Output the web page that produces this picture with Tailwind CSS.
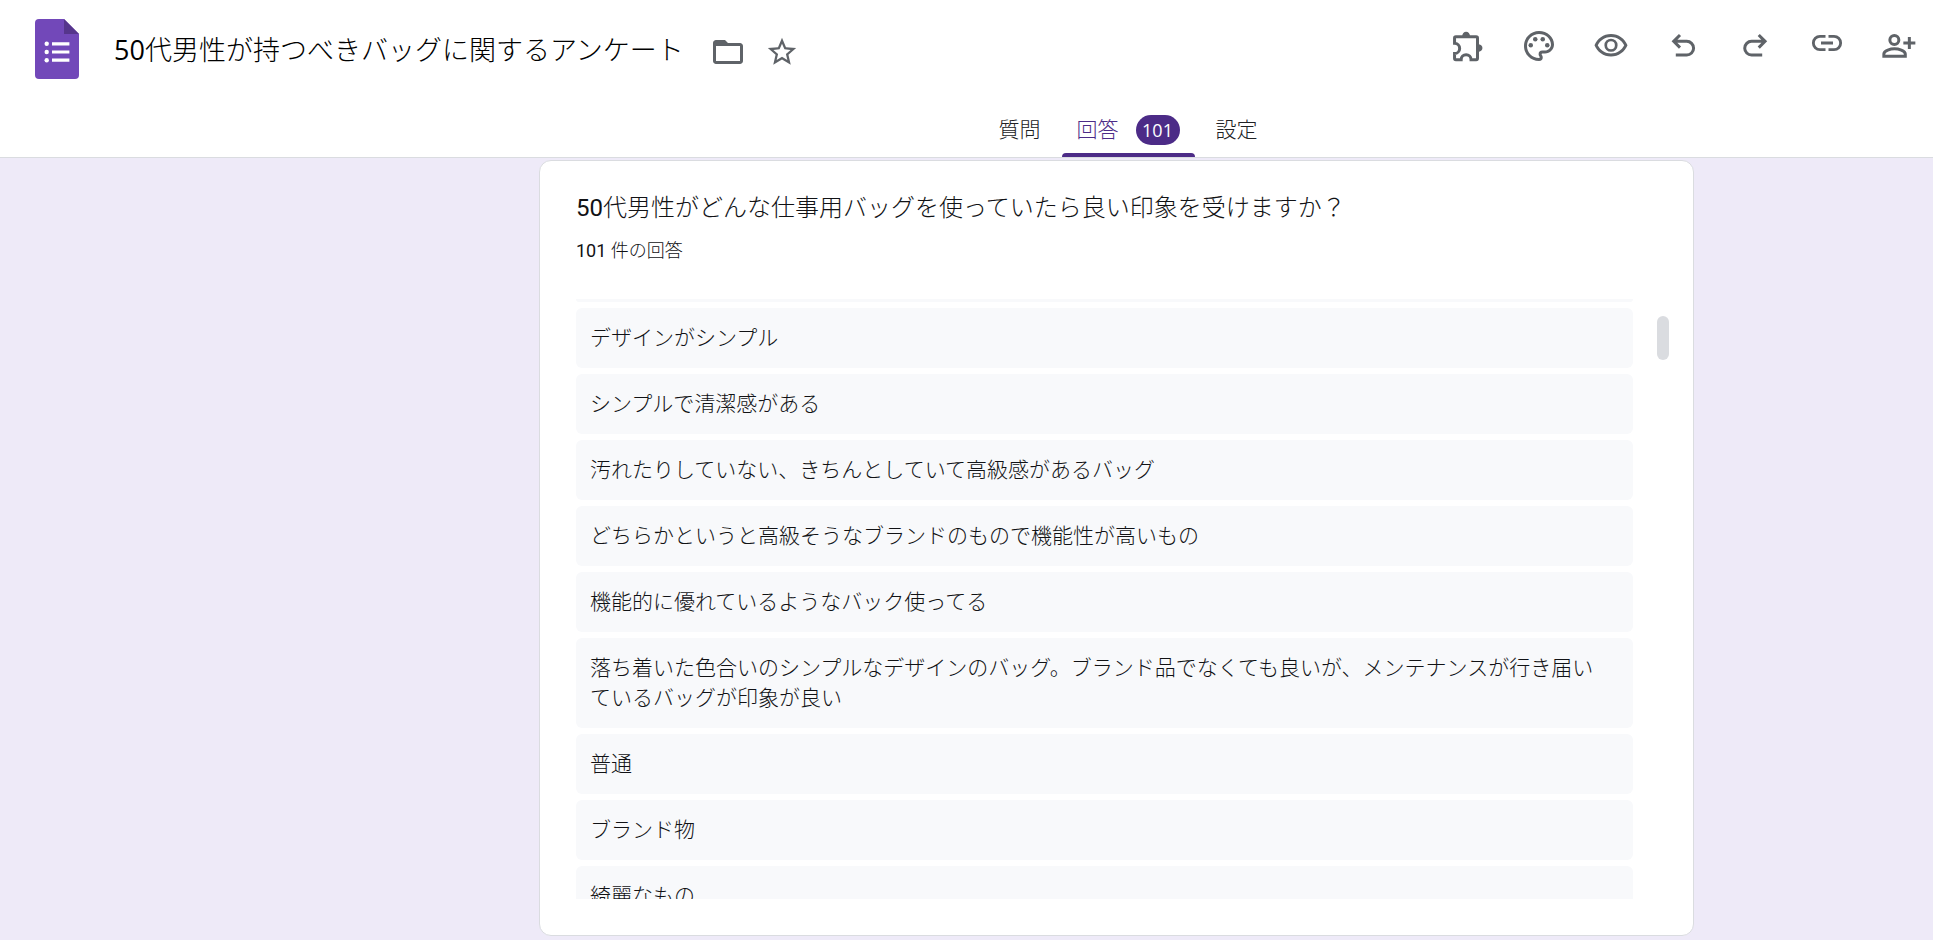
<!DOCTYPE html>
<html lang="ja">
<head>
<meta charset="utf-8">
<meta name="viewport" content="width=device-width, initial-scale=1">
<title>50代男性が持つべきバッグに関するアンケート</title>
<script src="https://cdn.jsdelivr.net/npm/@tailwindcss/browser@4"></script>
</head>
<body class="flex min-h-screen flex-col bg-[#eeeaf8] font-['Roboto','Noto_Sans_CJK_JP',sans-serif] font-light text-[#111215]">
  <header class="border-b border-[#dadce0] bg-white">
    <div class="flex items-start justify-between pl-[35px] pr-4">
      <div class="flex items-center pt-[19px]">
        <a href="#" aria-label="フォーム ホーム" class="shrink-0">
          <svg class="h-[60px] w-11" viewBox="0 0 44 60">
            <path fill="#7248b9" d="M4 0h25l15 15v41a4 4 0 0 1-4 4H4a4 4 0 0 1-4-4V4a4 4 0 0 1 4-4z"/>
            <path fill="#56358c" d="M29 0l15 15H29z"/>
            <g fill="#fff"><circle cx="11.7" cy="24.7" r="2.2"/><circle cx="11.7" cy="33" r="2.2"/><circle cx="11.7" cy="41.2" r="2.2"/>
            <path d="M17 23.2h17.4v3.2H17zM17 31.4h17.4v3.2H17zM17 39.6h17.4v3.2H17z"/></g>
          </svg>
        </a>
        <h1 class="ml-[35px] mt-[2px] font-['Open_Sans','Noto_Sans_CJK_JP',sans-serif] text-[27px] leading-9 text-black"><span class="font-normal">50</span>代男性が持つべきバッグに関するアンケート</h1>
        <button type="button" aria-label="フォルダに移動" class="ml-[26px] mt-[6px] text-[#5f6368]">
          <svg class="size-9" viewBox="0 0 24 24" fill="currentColor"><path d="M20 6h-8l-2-2H4c-1.1 0-2 .9-2 2v12c0 1.1.9 2 2 2h16c1.1 0 2-.9 2-2V8c0-1.1-.9-2-2-2zm0 12H4V8h16v10z"/></svg>
        </button>
        <button type="button" aria-label="スターを付ける" class="ml-[19px] mt-[6px] text-[#5f6368]">
          <svg class="size-[34px]" viewBox="0 0 24 24" fill="currentColor"><path d="M22 9.24l-7.19-.62L12 2 9.19 8.63 2 9.24l5.46 4.73L5.82 21 12 17.27 18.18 21l-1.63-7.03L22 9.24zM12 15.4l-3.76 2.27 1-4.28-3.32-2.88 4.38-.38L12 6.1l1.71 4.04 4.38.38-3.32 2.88 1 4.28L12 15.4z"/></svg>
        </button>
      </div>
      <div class="flex gap-9 pt-7 text-[#5f6368]">
        <button type="button" aria-label="アドオン"><svg class="size-9" viewBox="-0.5 0 24 24"><path fill="none" stroke="currentColor" stroke-width="2" d="M4.1 5.9h13.5a.9.9 0 0 1 .9.9v13.4a.9.9 0 0 1-.9.9h-3.4a3.3 3.3 0 0 0-6.6 0H4.1a.9.9 0 0 1-.9-.9V17a3.4 3.4 0 0 0 0-6.8V6.8a.9.9 0 0 1 .9-.9z"/><path fill="currentColor" d="M8.3 5.4a2.6 2.9 0 0 1 5.2 0zM18.9 10.8a2.9 2.6 0 0 1 0 5.2z"/></svg></button>
        <button type="button" aria-label="テーマをカスタマイズ"><svg class="size-9" viewBox="0 0 24 24" fill="currentColor"><path d="M12 22C6.49 22 2 17.51 2 12S6.49 2 12 2s10 4.04 10 9c0 3.31-2.69 6-6 6h-1.77c-.28 0-.5.22-.5.5 0 .12.05.23.13.33.41.47.64 1.06.64 1.67A2.5 2.5 0 0 1 12 22zm0-18c-4.41 0-8 3.59-8 8s3.59 8 8 8c.28 0 .5-.22.5-.5a.54.54 0 0 0-.14-.35c-.41-.46-.63-1.05-.63-1.65a2.5 2.5 0 0 1 2.5-2.5H16c2.21 0 4-1.79 4-4 0-3.86-3.59-7-8-7z"/><circle cx="6.5" cy="11.5" r="1.5"/><circle cx="9.5" cy="7.5" r="1.5"/><circle cx="14.5" cy="7.5" r="1.5"/><circle cx="17.5" cy="11.5" r="1.5"/></svg></button>
        <button type="button" aria-label="プレビュー"><svg class="size-9" viewBox="0 0 24 24" fill="currentColor"><path d="M12 6c3.79 0 7.17 2.13 8.82 5.5C19.17 14.87 15.79 17 12 17s-7.17-2.13-8.82-5.5C4.83 8.13 8.21 6 12 6m0-2C7 4 2.73 7.11 1 11.5 2.73 15.89 7 19 12 19s9.27-3.11 11-7.5C21.27 7.11 17 4 12 4z"/><circle cx="12" cy="11.5" r="3.5" fill="none" stroke="currentColor" stroke-width="1.8"/></svg></button>
        <button type="button" aria-label="元に戻す"><svg class="size-9" viewBox="0 0 24 24" fill="none" stroke="currentColor" stroke-width="2"><path d="M10 4.7 5.8 8.9l4.2 4.2M5.8 8.9h8.7a4.55 4.55 0 0 1 0 9.1H7.2"/></svg></button>
        <button type="button" aria-label="やり直し"><svg class="size-9" viewBox="0 0 24 24" fill="none" stroke="currentColor" stroke-width="2"><path d="M14.5 4.7l4.2 4.2-4.2 4.2M18.7 8.9H9.7a4.55 4.55 0 0 0 0 9.1h7.1"/></svg></button>
        <button type="button" aria-label="回答者へのリンクをコピー"><svg class="size-9" viewBox="0 0 24 24" fill="none" stroke="currentColor" stroke-width="1.9"><path d="M11 5.6H7.3a4.4 4.4 0 0 0 0 8.8H11M13 5.6h3.7a4.4 4.4 0 0 1 0 8.8H13M8 10h8"/></svg></button>
        <button type="button" aria-label="共有"><svg class="size-9" viewBox="0 0 24 24" fill="none" stroke="currentColor" stroke-width="2"><circle cx="8.9" cy="8" r="3"/><path d="M1.9 18.9v-1.5c0-2.4 4.6-3.6 7.1-3.6s7.2 1.2 7.2 3.6v1.5zM18.9 6v8M14.9 10h8"/></svg></button>
      </div>
    </div>
    <nav class="mt-6 flex justify-center gap-[6px] pl-[323px] text-[21px] leading-[30px]" aria-label="フォームのタブ">
      <a href="#questions" class="px-[15px] pt-3 text-[#202124]">質問</a>
      <a href="#responses" aria-current="page" class="text-[#4c2b87]">
        <span class="flex items-center gap-[17px] px-[15px] pb-2 pt-3">回答 <span class="h-[30px] w-11 rounded-full bg-[#4c2b87] text-center font-['Open_Sans',sans-serif] text-[18px] font-medium text-white">101</span></span>
        <span class="block h-1 rounded-t bg-[#4c2b87]"></span>
      </a>
      <a href="#settings" class="px-[15px] pt-3 text-[#202124]">設定</a>
    </nav>
  </header>

  <main class="flex justify-center pl-[300px] pt-[2px] pb-1">
    <section id="responses" class="w-full max-w-[1155px] rounded-xl border border-[#dadce0] bg-white pb-9 pl-9 pr-6 pt-[29px]">
      <h2 class="text-[24px] leading-9"><span class="font-normal">50</span>代男性がどんな仕事用バッグを使っていたら良い印象を受けますか？</h2>
      <p class="mt-[11px] text-[18px] leading-[27px]"><span class="font-normal">101</span> 件の回答</p>
      <div class="mt-[35px] flex gap-6">
        <ul class="flex max-h-[600px] flex-1 flex-col gap-[6px] overflow-hidden text-[21px] leading-[30px] *:shrink-0 *:bg-[#f8f9fb]">
          <li class="h-[3px] rounded-b-md" aria-hidden="true"></li>
          <li class="rounded-md py-[15px] pl-[14px] pr-5">デザインがシンプル</li>
          <li class="rounded-md py-[15px] pl-[14px] pr-5">シンプルで清潔感がある</li>
          <li class="rounded-md py-[15px] pl-[14px] pr-5">汚れたりしていない、きちんとしていて高級感があるバッグ</li>
          <li class="rounded-md py-[15px] pl-[14px] pr-5">どちらかというと高級そうなブランドのもので機能性が高いもの</li>
          <li class="rounded-md py-[15px] pl-[14px] pr-5">機能的に優れているようなバック使ってる</li>
          <li class="rounded-md py-[15px] pl-[14px] pr-5">落ち着いた色合いのシンプルなデザインのバッグ。ブランド品でなくても良いが、メンテナンスが行き届いているバッグが印象が良い</li>
          <li class="rounded-md py-[15px] pl-[14px] pr-5">普通</li>
          <li class="rounded-md py-[15px] pl-[14px] pr-5">ブランド物</li>
          <li class="rounded-md py-[15px] pl-[14px] pr-5">綺麗なもの</li>
        </ul>
        <div class="mt-[17px] h-11 w-3 shrink-0 rounded-full bg-[#dadce0]"></div>
      </div>
    </section>
  </main>
</body>
</html>
